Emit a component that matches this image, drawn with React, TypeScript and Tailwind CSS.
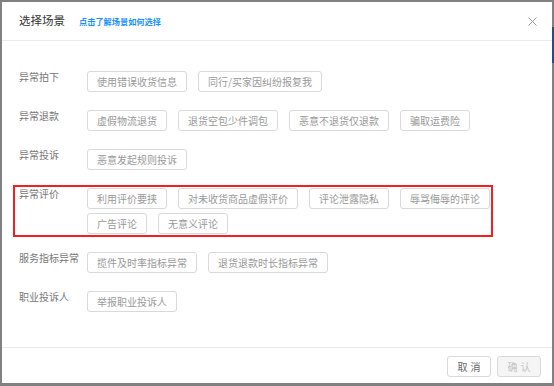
import React, { FC } from 'react';

const rows = [
  { label: '异常拍下', items: ['使用错误收货信息', '同行/买家因纠纷报复我'] },
  { label: '异常退款', items: ['虚假物流退货', '退货空包少件调包', '恶意不退货仅退款', '骗取运费险'] },
  { label: '异常投诉', items: ['恶意发起规则投诉'] },
  {
    label: '异常评价',
    items: ['利用评价要挟', '对未收货商品虚假评价', '评论泄露隐私', '辱骂侮辱的评论', '广告评论', '无意义评论'],
    marked: true,
  },
  { label: '服务指标异常', items: ['揽件及时率指标异常', '退货退款时长指标异常'] },
  { label: '职业投诉人', items: ['举报职业投诉人'] },
];

const font = { fontFamily: '"Noto Sans CJK SC", "Noto Sans", sans-serif' };

const App: FC = () => {
  return (
    <div className="w-[554px] h-[386px] bg-[#818181] flex pt-[2px] pl-[2px] overflow-hidden" style={font}>
      <div className="w-[550px] h-[381px] bg-white flex flex-col">
        <div className="h-[39px] border-b border-[#ebebeb] flex items-center pl-[17px] pr-[15px]">
          <span className="text-[11.5px] text-[#333]">选择场景</span>
          <span className="ml-[14px] text-[8.2px] font-bold text-[#1890ff]">点击了解场景如何选择</span>
          <svg className="ml-auto" width="9" height="9" viewBox="0 0 9 9">
            <path d="M0.5 0.5 L8.5 8.5 M8.5 0.5 L0.5 8.5" stroke="#9a9a9a" strokeWidth="1" />
          </svg>
        </div>

        <div className="flex-1 flex flex-col gap-[18px] pt-[30px] pl-[17px]">
          {rows.map((row, index) => (
            <div key={index} className="relative flex">
              {row.marked && (
                <div className="absolute left-[-6px] top-[-3px] bottom-[-3px] w-[480px] border-2 border-[#f42020]" />
              )}
              <div className="w-[68px] shrink-0 text-[10px] leading-[12px] text-[#777]">{row.label}</div>
              <div className="flex flex-wrap gap-x-[11px] gap-y-[4px] w-[440px]">
                {row.items.map((item) => (
                  <div
                    key={item}
                    className="h-[21px] px-[9px] flex items-center border border-[#d9d9d9] rounded-[3px] text-[10px] text-[#999] bg-white whitespace-nowrap"
                  >
                    {item}
                  </div>
                ))}
              </div>
            </div>
          ))}
        </div>

        <div className="h-[36px] border-t border-[#e8e8e8] flex justify-end gap-[6px] pt-[8px] pr-[11px]">
          <div className="w-[44px] h-[21px] flex items-center justify-center border border-[#d9d9d9] rounded-[3px] text-[10px] text-[#666] tracking-[3px] pl-[3px]">
            取消
          </div>
          <div className="w-[44px] h-[21px] flex items-center justify-center border border-[#d9d9d9] rounded-[3px] bg-[#f5f5f5] text-[10px] text-[#c4c4c4] tracking-[3px] pl-[3px]">
            确认
          </div>
        </div>
      </div>
      <div className="flex flex-col">
        <div className="mt-[25px] w-[2px] h-[36px] bg-[#1f4f86]" />
      </div>
    </div>
  );
};

export default App;
